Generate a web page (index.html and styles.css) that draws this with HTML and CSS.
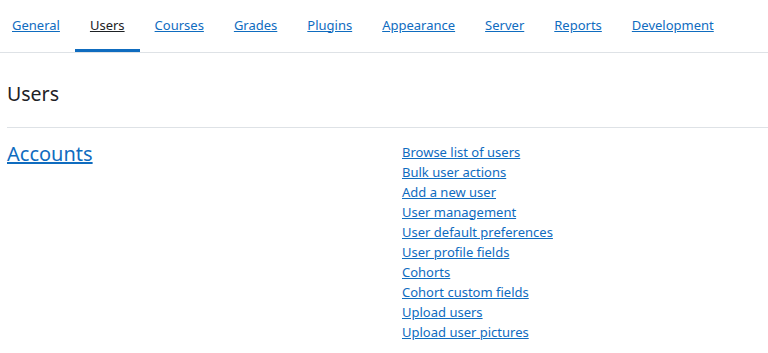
FILE: index.html
```html
<!DOCTYPE html>
<html lang="en">
<head>
    <meta charset="UTF-8">
    <title>Site administration - Users</title>
    <link rel="stylesheet" href="styles.css">
</head>
<body>
    <nav class="tabs">
        <a href="#">General</a>
        <a href="#" class="active">Users</a>
        <a href="#">Courses</a>
        <a href="#">Grades</a>
        <a href="#">Plugins</a>
        <a href="#">Appearance</a>
        <a href="#">Server</a>
        <a href="#">Reports</a>
        <a href="#">Development</a>
    </nav>

    <div class="page">
        <h2>Users</h2>
        <hr>
        <div class="category">
            <h3><a href="#">Accounts</a></h3>
            <ul class="links">
                <li><a href="#">Browse list of users</a></li>
                <li><a href="#">Bulk user actions</a></li>
                <li><a href="#">Add a new user</a></li>
                <li><a href="#">User management</a></li>
                <li><a href="#">User default preferences</a></li>
                <li><a href="#">User profile fields</a></li>
                <li><a href="#">Cohorts</a></li>
                <li><a href="#">Cohort custom fields</a></li>
                <li><a href="#">Upload users</a></li>
                <li><a href="#">Upload user pictures</a></li>
            </ul>
        </div>
    </div>
</body>
</html>
```

FILE: styles.css
```css
/* Base */
body {
    margin: 0;
    font-family: "Noto Sans", "Open Sans", sans-serif;
    font-size: 13px;
    color: #1d2125;
    background: #fff;
    overflow: hidden;
}

a {
    color: #0f6cbf;
    text-decoration: underline;
}

/* Tabs */
.tabs {
    display: flex;
    height: 52px;
    margin-left: -3px;
    border-bottom: 1px solid #dee2e6;
}

.tabs a {
    display: flex;
    align-items: center;
    padding: 0 15px;
    height: 49px;
    border-bottom: 3px solid transparent;
}

.tabs a.active {
    color: #1d2125;
    border-bottom-color: #0f6cbf;
}

/* Content */
.page {
    padding-left: 7px;
}

h2 {
    margin: 29px 0 0;
    font-size: 19.5px;
    font-weight: 400;
    line-height: 24px;
}

hr {
    margin: 20.5px 0 0;
    border: 0;
    border-top: 1px solid #dee2e6;
}

.category {
    display: grid;
    grid-template-columns: 395px 1fr;
}

.category h3 {
    margin: 13px 0 0;
    font-size: 20px;
    font-weight: 400;
    line-height: 26px;
}

.links {
    list-style: none;
    margin: 14px 0 0;
    padding: 0;
    line-height: 20.1px;
}
```
